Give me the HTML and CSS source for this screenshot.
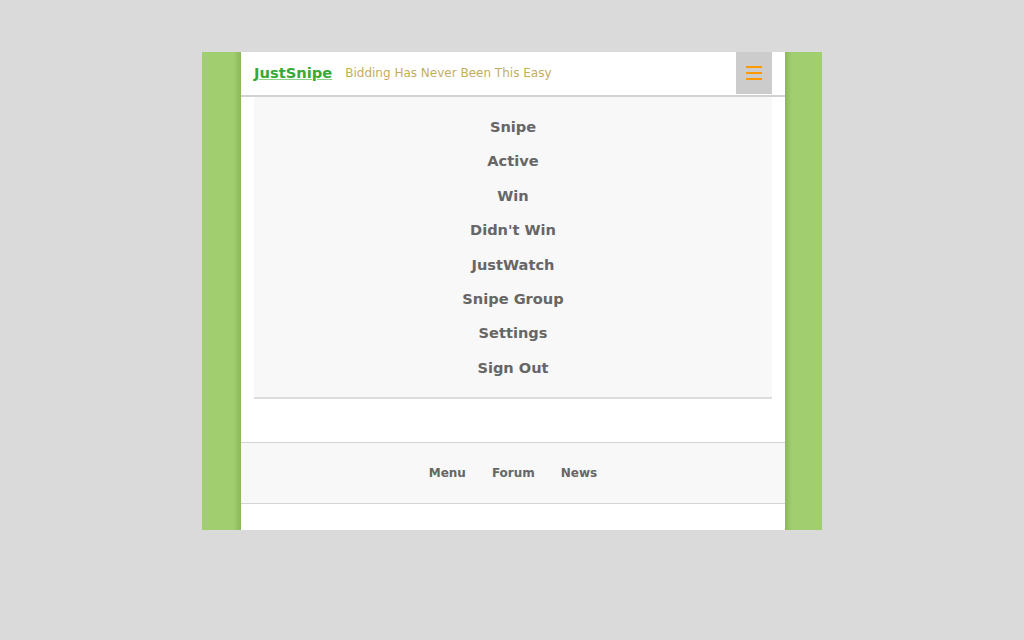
FILE: index.html
```html
<!DOCTYPE html>
<html>
<head>
<meta charset="utf-8">
<link rel="stylesheet" href="styles.css">
</head>
<body>
<div class="page">
  <div class="sheet">
    <header class="header">
      <a class="logo" href="#">JustSnipe</a>
      <span class="tagline">Bidding Has Never Been This Easy</span>
      <button class="burger" aria-label="menu">
        <span></span><span></span><span></span>
      </button>
    </header>
    <nav class="menu">
      <a href="#">Snipe</a>
      <a href="#">Active</a>
      <a href="#">Win</a>
      <a href="#">Didn't Win</a>
      <a href="#">JustWatch</a>
      <a href="#">Snipe Group</a>
      <a href="#">Settings</a>
      <a href="#">Sign Out</a>
    </nav>
    <footer class="footer">
      <a href="#">Menu</a>
      <a href="#">Forum</a>
      <a href="#">News</a>
    </footer>
  </div>
</div>
</body>
</html>
```
FILE: styles.css
```css
html, body {
  margin: 0;
  padding: 0;
  background: #dadada;
  font-family: "DejaVu Sans", Verdana, sans-serif;
}
.page {
  width: 544px;
  margin: 52px auto 0;
  padding: 0 37px 0 39px;
  background: linear-gradient(to right,
    #a1cf6f 0, #a1cf6f 31px, #8cb75b 39px,
    #ffffff 39px, #ffffff 583px,
    #8cb75b 583px, #a1cf6f 590px, #a1cf6f 100%);
}
.sheet {
  background: #fff;
  padding-bottom: 26px;
}
.header {
  height: 43px;
  border-bottom: 2px solid #d2d2d2;
  display: flex;
  align-items: flex-start;
  padding-left: 13px;
  padding-right: 13px;
}
.logo {
  margin-top: 12px;
  color: #38a935;
  font-weight: bold;
  font-size: 14.7px;
  text-decoration: underline;
  text-decoration-color: #8fd18a;
}
.tagline {
  margin-top: 14px;
  margin-left: 13px;
  color: #c3ad5e;
  font-size: 12px;
}
.burger {
  margin-left: auto;
  width: 36px;
  height: 42px;
  border: 0;
  padding: 0;
  background: #cccccc;
  display: flex;
  flex-direction: column;
  align-items: center;
  justify-content: center;
  gap: 4px;
}
.burger span {
  display: block;
  width: 16px;
  height: 2px;
  background: #ff9900;
}
.menu {
  margin: 0 13px;
  background: #f8f8f8;
  border-bottom: 2px solid #dddddd;
  padding: 13px 0 12px;
  display: flex;
  flex-direction: column;
  align-items: center;
}
.menu a {
  display: block;
  height: 34.4px;
  line-height: 34.4px;
  color: #666;
  font-weight: bold;
  font-size: 14.6px;
  text-decoration: none;
}
.footer {
  margin-top: 43px;
  border-top: 1px solid #d4d4d4;
  border-bottom: 1px solid #d4d4d4;
  background: #f8f8f8;
  height: 60px;
  display: flex;
  justify-content: center;
  align-items: center;
  gap: 26px;
}
.footer a {
  color: #666;
  font-weight: bold;
  font-size: 12px;
  text-decoration: none;
}
```
